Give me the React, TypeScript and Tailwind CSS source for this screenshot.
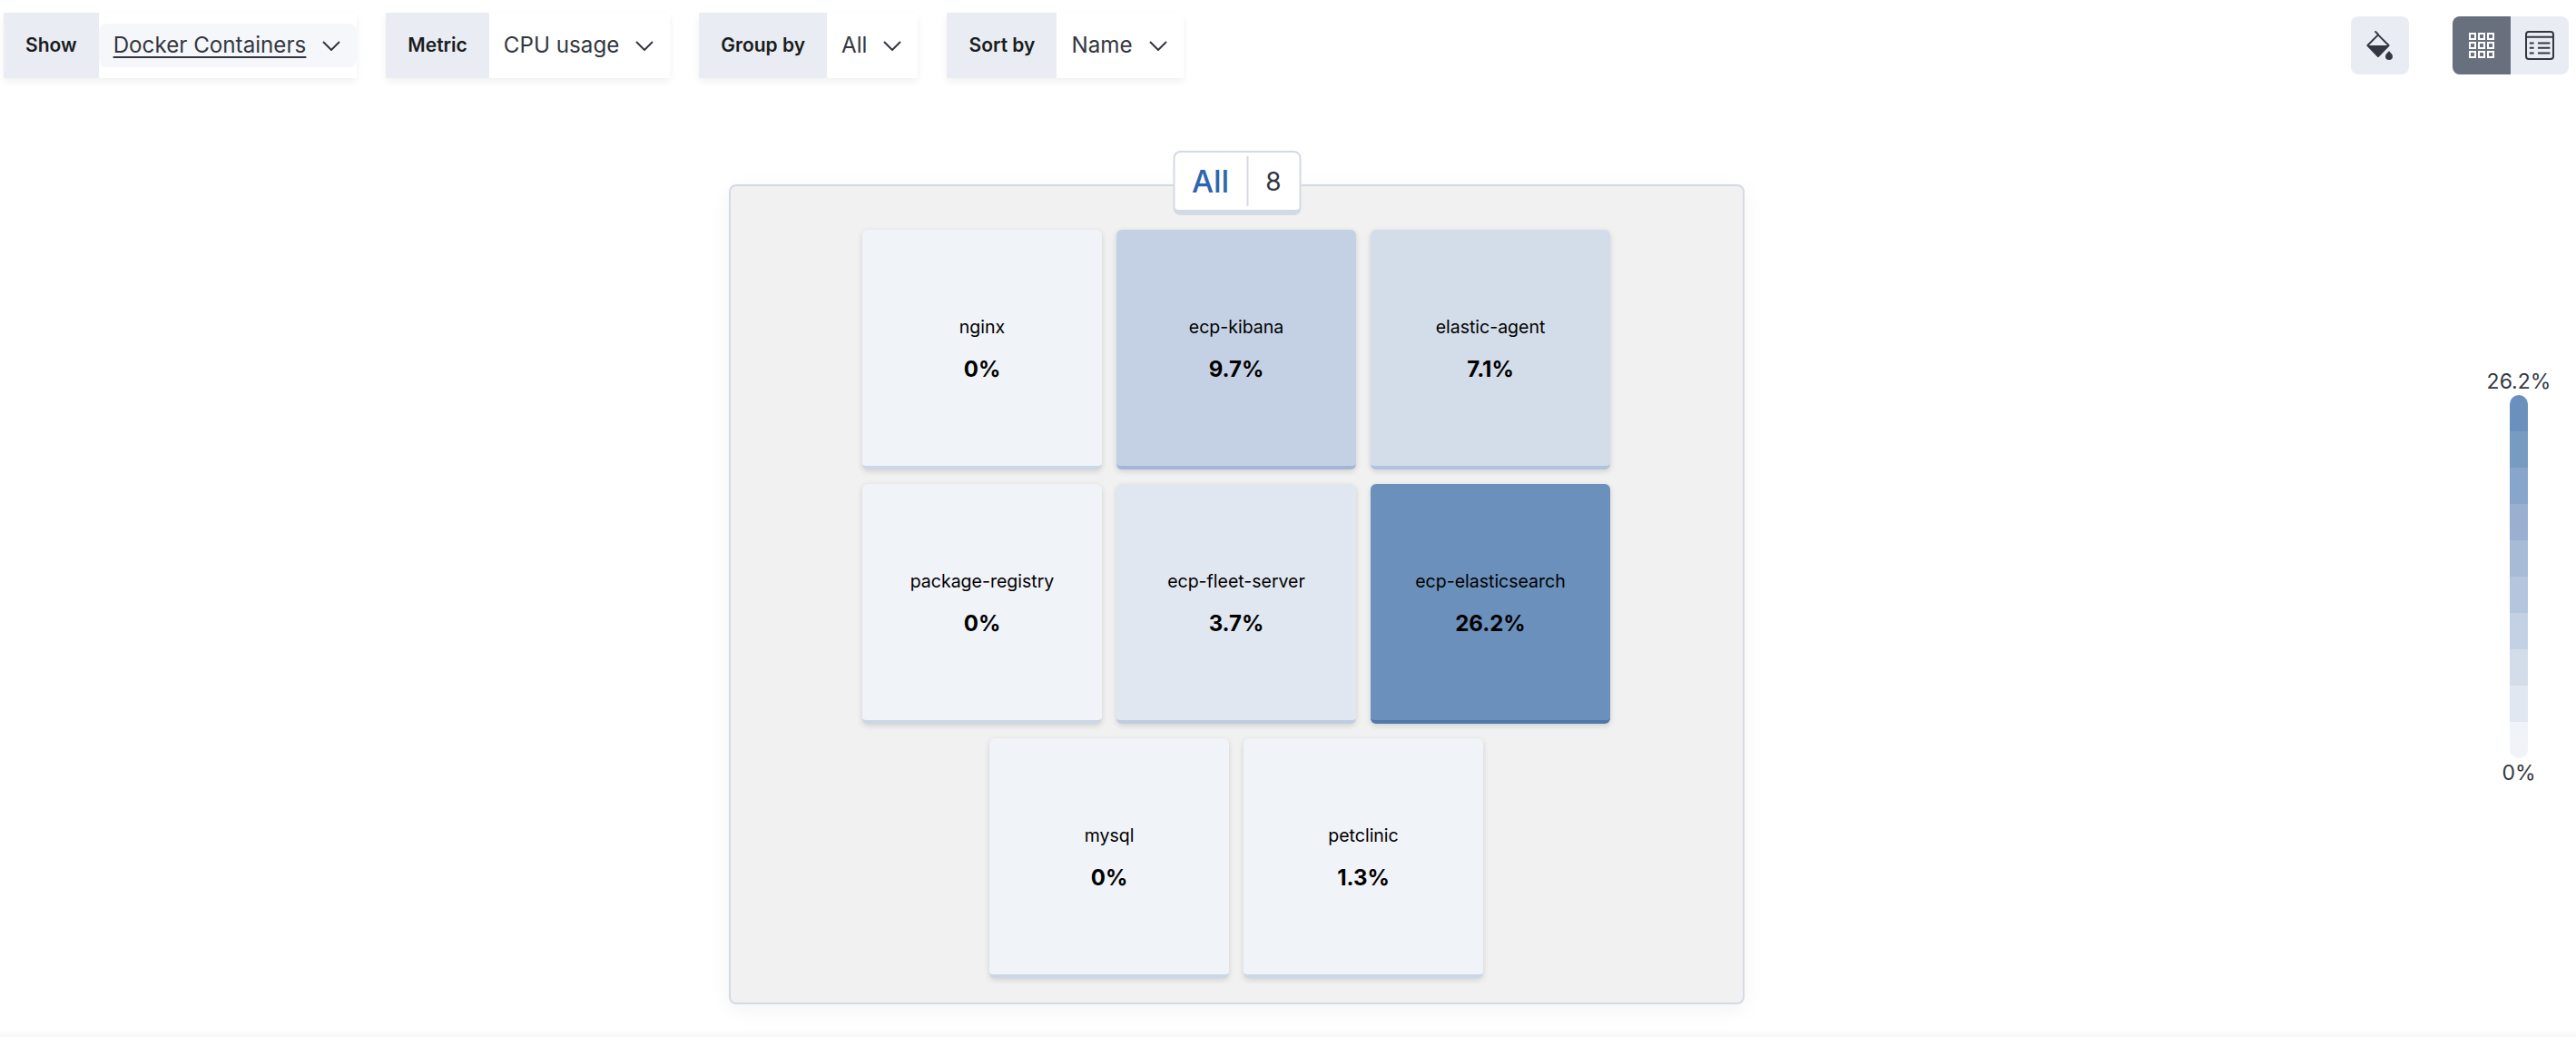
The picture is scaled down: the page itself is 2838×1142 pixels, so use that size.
import { ReactNode } from 'react';

const controls = [
  { label: 'Show', value: 'Docker Containers', active: true },
  { label: 'Metric', value: 'CPU usage' },
  { label: 'Group by', value: 'All' },
  { label: 'Sort by', value: 'Name' },
];

const rows = [
  [
    { name: 'nginx', value: '0%', tone: 'bg-[#f0f3f8] border-[#cbd7e6]' },
    { name: 'ecp-kibana', value: '9.7%', tone: 'bg-[#c4d1e5] border-[#a3b6d5]' },
    { name: 'elastic-agent', value: '7.1%', tone: 'bg-[#d3dde9] border-[#b0c3dc]' },
  ],
  [
    { name: 'package-registry', value: '0%', tone: 'bg-[#f0f3f8] border-[#cbd7e6]' },
    { name: 'ecp-fleet-server', value: '3.7%', tone: 'bg-[#e1e7f1] border-[#bfcce2]' },
    { name: 'ecp-elasticsearch', value: '26.2%', tone: 'bg-[#6b90bc] border-[#5078a8]' },
  ],
  [
    { name: 'mysql', value: '0%', tone: 'bg-[#f0f3f8] border-[#cbd7e6]' },
    { name: 'petclinic', value: '1.3%', tone: 'bg-[#f0f3f8] border-[#cbd7e6]' },
  ],
];

const legendSteps = [
  'bg-[#6b90bd]',
  'bg-[#789bc2]',
  'bg-[#88a6cc]',
  'bg-[#9bb0d0]',
  'bg-[#a7bad6]',
  'bg-[#b4c6de]',
  'bg-[#c4d1e5]',
  'bg-[#d3dde9]',
  'bg-[#e1e7f1]',
  'bg-[#f0f3f8]',
];

function Chevron() {
  return (
    <svg width="20" height="11" viewBox="0 0 20 11" fill="none" className="shrink-0">
      <polyline points="1,1 10,10 19,1" stroke="#343741" strokeWidth="2" />
    </svg>
  );
}

function Control({ label, value, active }: { label: string; value: string; active?: boolean }) {
  return (
    <div className="flex h-[72px] bg-white shadow-[0_4px_8px_rgba(0,0,0,0.06)]">
      <div className="flex items-center bg-[#e9edf3] px-6 text-[21px] font-semibold text-[#1a1c21]">{label}</div>
      <div
        className={`flex h-12 items-center gap-[18px] self-center rounded-lg pr-[18px] pl-4 text-[24.2px] text-[#343741] ${
          active ? 'bg-[#f6f7fa]' : ''
        }`}
      >
        <span className={active ? 'underline underline-offset-4' : ''}>{value}</span>
        <Chevron />
      </div>
    </div>
  );
}

function Card({ name, value, tone }: { name: string; value: string; tone: string }) {
  return (
    <div
      className={`flex h-[264px] w-[264px] flex-col items-center justify-center rounded-md border-b-4 pt-[3px] text-black shadow-[0_2px_6px_rgba(0,0,0,0.14)] ${tone}`}
    >
      <div className="mb-[15px] text-[19.5px] leading-[30px]">{name}</div>
      <div className="text-[24px] leading-[34px] font-bold">{value}</div>
    </div>
  );
}

function IconButton({ children, className }: { children: ReactNode; className: string }) {
  return <div className={`flex h-16 w-16 items-center justify-center ${className}`}>{children}</div>;
}

export default function App() {
  return (
    <div className="flex h-[1142px] flex-col overflow-hidden bg-white font-['Inter',sans-serif]">
      {/* Toolbar */}
      <div className="flex items-start pt-[14px] pr-2 pl-1">
        <div className="flex gap-8">
          {controls.map((c) => (
            <Control key={c.label} {...c} />
          ))}
        </div>
        <div className="mt-1 ml-auto flex gap-12">
          <IconButton className="rounded-lg bg-[#e9edf3]">
            <svg width="32" height="32" viewBox="0 0 16 16" fill="none">
              <path d="M5.3 0.2 L7.2 2.2" stroke="#343741" strokeWidth="1" />
              <path d="M7 2.2 L12.8 8 L7 14 L1.2 8 Z" stroke="#343741" strokeWidth="1" strokeLinejoin="round" />
              <path d="M1.2 8 H12.8 L7 14 Z" fill="#343741" />
              <path d="M13 11 C13.6 12 15 12.8 15 14 A2 2 0 0 1 11 14 C11 12.8 12.4 12 13 11 Z" fill="#343741" />
            </svg>
          </IconButton>
          <div className="flex overflow-hidden rounded-lg">
            <IconButton className="bg-[#69707d]">
              <svg width="32" height="32" viewBox="0 0 16 16" fill="none" stroke="#ffffff" strokeWidth="1">
                {[1.5, 6.5, 11.5].map((y) =>
                  [1.5, 6.5, 11.5].map((x) => <rect key={`${x}-${y}`} x={x} y={y} width="3" height="3" />),
                )}
              </svg>
            </IconButton>
            <IconButton className="bg-[#e9edf3]">
              <svg width="32" height="32" viewBox="0 0 16 16" fill="none" stroke="#343741" strokeWidth="1">
                <rect x="0.5" y="0.5" width="15" height="15" rx="1.5" />
                <path d="M0.5 3.4 H15.5" />
                <path d="M2.4 6.7 H4.8 M7 6.7 H13.7 M2.4 9.4 H4.8 M7 9.4 H13.7 M2.4 12.3 H4.8 M7 12.3 H13.7" />
              </svg>
            </IconButton>
          </div>
        </div>
      </div>

      {/* Map + legend */}
      <div className="flex min-h-0 flex-1">
        <div className="flex flex-1 justify-center pt-[117px]">
          <div className="relative h-[903px] w-[1119px] rounded-lg border-2 border-[#d3dae6] bg-[#f1f1f1] pt-12 shadow-[0_6px_24px_rgba(0,0,0,0.05)]">
            <div className="absolute -top-[39px] left-1/2 flex h-[71px] w-[141px] -translate-x-1/2 items-center rounded-lg border-2 border-b-[6px] border-[#d3dae6] bg-white">
              <div className="flex w-[79px] justify-center text-[34px] font-medium text-[#2d66ae]">All</div>
              <div className="h-[55px] w-0.5 bg-[#d3dae6]" />
              <div className="flex flex-1 justify-center text-[28px] text-[#343741]">8</div>
            </div>
            <div className="flex flex-col gap-4">
              {rows.map((row, i) => (
                <div key={i} className="flex justify-center gap-4 pr-px">
                  {row.map((card) => (
                    <Card key={card.name} {...card} />
                  ))}
                </div>
              ))}
            </div>
          </div>
        </div>
        <div className="flex w-[113px] flex-col items-center pt-[318px] pr-[13px] text-[23px] text-[#343741]">
          <div className="mb-[-2px] leading-8">26.2%</div>
          <div className="my-px flex w-5 flex-col overflow-hidden rounded-full">
            {legendSteps.map((s) => (
              <div key={s} className={`h-10 ${s}`} />
            ))}
          </div>
          <div className="mt-[-1px] leading-8">0%</div>
        </div>
      </div>
      <div className="h-2 shrink-0 bg-linear-to-b from-white to-[#f6f6f6]" />
    </div>
  );
}
